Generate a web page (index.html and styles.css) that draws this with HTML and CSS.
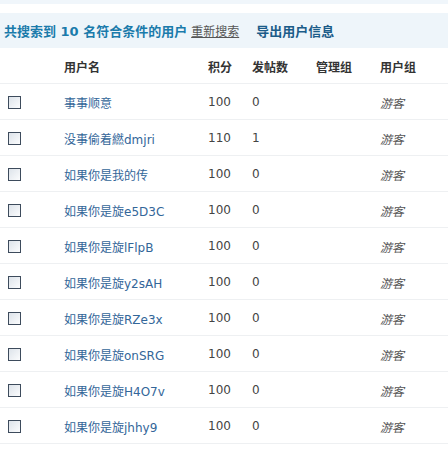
FILE: index.html
```html
<!DOCTYPE html>
<html>
<head>
<meta charset="utf-8">
<link rel="stylesheet" href="styles.css">
</head>
<body>
<div class="topline"></div>
<div class="band">
  <span class="result">共搜索到 10 名符合条件的用户</span>
  <a class="again">重新搜索</a>
  <a class="export">导出用户信息</a>
</div>
<table class="users">
  <thead>
    <tr><th class="c-chk"></th><th class="c-name">用户名</th><th class="c-score">积分</th><th class="c-posts">发帖数</th><th class="c-admin">管理组</th><th class="c-group">用户组</th></tr>
  </thead>
  <tbody>
    <tr><td><span class="chk"></span></td><td class="name">事事顺意</td><td>100</td><td>0</td><td></td><td class="grp">游客</td></tr>
    <tr><td><span class="chk"></span></td><td class="name">没事偷着繎dmjri</td><td>110</td><td>1</td><td></td><td class="grp">游客</td></tr>
    <tr><td><span class="chk"></span></td><td class="name">如果你是我的传</td><td>100</td><td>0</td><td></td><td class="grp">游客</td></tr>
    <tr><td><span class="chk"></span></td><td class="name">如果你是旋e5D3C</td><td>100</td><td>0</td><td></td><td class="grp">游客</td></tr>
    <tr><td><span class="chk"></span></td><td class="name">如果你是旋lFlpB</td><td>100</td><td>0</td><td></td><td class="grp">游客</td></tr>
    <tr><td><span class="chk"></span></td><td class="name">如果你是旋y2sAH</td><td>100</td><td>0</td><td></td><td class="grp">游客</td></tr>
    <tr><td><span class="chk"></span></td><td class="name">如果你是旋RZe3x</td><td>100</td><td>0</td><td></td><td class="grp">游客</td></tr>
    <tr><td><span class="chk"></span></td><td class="name">如果你是旋onSRG</td><td>100</td><td>0</td><td></td><td class="grp">游客</td></tr>
    <tr><td><span class="chk"></span></td><td class="name">如果你是旋H4O7v</td><td>100</td><td>0</td><td></td><td class="grp">游客</td></tr>
    <tr><td><span class="chk"></span></td><td class="name">如果你是旋jhhy9</td><td>100</td><td>0</td><td></td><td class="grp">游客</td></tr>
  </tbody>
</table>
</body>
</html>
```

FILE: styles.css
```css
html, body {
  margin: 0;
  padding: 0;
  background: #fff;
  font-family: "DejaVu Sans", "Noto Sans CJK SC", sans-serif;
  font-size: 12px;
  color: #444;
}
.topline {
  height: 4px;
  background: #f0f6fb;
  margin-bottom: 9px;
}
.band {
  height: 35px;
  background: #eef5fa;
  display: flex;
  align-items: center;
  padding-left: 4px;
  white-space: nowrap;
}
.result {
  font-weight: bold;
  font-size: 13px;
  color: #1a7bab;
  font-family: "DejaVu Sans", "Noto Sans CJK SC", sans-serif;
}
.again {
  margin-left: 4px;
  color: #555;
  text-decoration: underline;
  font-family: "Noto Sans CJK SC", sans-serif;
}
.export {
  margin-left: 17px;
  font-weight: bold;
  font-size: 13px;
  color: #1b5c89;
  font-family: "Noto Sans CJK SC", sans-serif;
}
.users {
  width: 448px;
  border-collapse: collapse;
  table-layout: fixed;
}
.users th, .users td {
  height: 34px;
  padding: 1px 0 0 0;
  text-align: left;
  border-bottom: 1px solid #eef0f2;
  white-space: nowrap;
}
.users th {
  font-weight: bold;
  color: #333;
  font-family: "Noto Sans CJK SC", sans-serif;
}
.c-chk { width: 64px; }
.c-name { width: 144px; }
.c-score { width: 44px; }
.c-posts { width: 64px; }
.c-admin { width: 64px; }
.c-group { width: 68px; }
.chk {
  display: block;
  width: 11px;
  height: 11px;
  margin-left: 8px;
  border: 1px solid #3d4b5c;
  background: linear-gradient(135deg, #dde3ea, #fbfcfd);
}
.name {
  color: #336699;
}
.grp {
  font-style: italic;
  color: #555;
}
```
